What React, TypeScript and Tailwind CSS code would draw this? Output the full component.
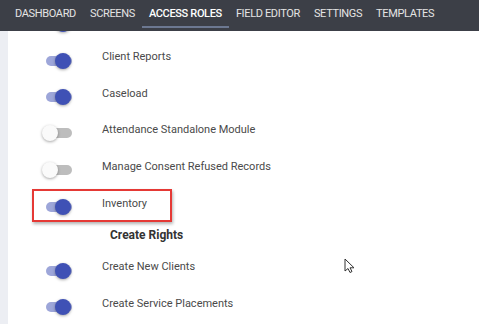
import React from "react";

const tabs = ["DASHBOARD", "SCREENS", "ACCESS ROLES", "FIELD EDITOR", "SETTINGS", "TEMPLATES"];

function Toggle({ on }: { on: boolean }) {
  return (
    <div className="relative w-[29px] h-[16px] shrink-0">
      <div
        className={
          "absolute left-[2px] top-[3px] w-[26px] h-[10px] rounded-full " +
          (on ? "bg-[#9da6d9]" : "bg-[#bdbdbd]")
        }
      />
      {on ? (
        <div className="absolute left-[11px] top-0 w-[16px] h-[16px] rounded-full bg-[#3f51b5] shadow-[0_1px_3px_rgba(0,0,0,0.35)]" />
      ) : (
        <div className="absolute left-[-2px] top-0 w-[16px] h-[16px] rounded-full bg-[#fafafa] shadow-[0_1px_3px_rgba(0,0,0,0.35)]" />
      )}
    </div>
  );
}

function Row({
  label,
  on,
  h,
  boxed,
}: {
  label: string;
  on: boolean;
  h: string;
  boxed?: boolean;
}) {
  return (
    <div className={"relative flex items-center pl-[36px] " + h}>
      <Toggle on={on} />
      {label && (
        <span className="ml-[29px] mb-[6px] text-[11px] text-[#4a4a4a]">{label}</span>
      )}
      {boxed && (
        <div className="absolute left-[24px] top-0 w-[140px] h-[33px] border-2 border-[#e53935] shadow-[1px_2px_3px_rgba(0,0,0,0.3)]" />
      )}
    </div>
  );
}

export default function App() {
  return (
    <div
      className="w-[479px] h-[324px] overflow-hidden bg-white flex flex-col"
      style={{ fontFamily: "Roboto, 'Liberation Sans', sans-serif" }}
    >
      <nav className="h-[31px] shrink-0 bg-[#3c3f47] flex pl-[8px] relative z-10">
        {tabs.map((t) => {
          const active = t === "ACCESS ROLES";
          return (
            <div
              key={t}
              className={
                "relative shrink-0 whitespace-nowrap px-[7px] pt-[7px] text-[11px] leading-[13px] tracking-[-0.35px] " +
                (active ? "text-white font-medium" : "text-[#e4e4e4] font-normal")
              }
            >
              {t}
              {active && (
                <div className="absolute left-0 right-0 bottom-[3px] h-[2px] bg-[#6c7891]" />
              )}
            </div>
          );
        })}
      </nav>
      <div className="flex-1 flex min-h-0">
        <div className="w-[8px] bg-[#eceef3] shrink-0" />
        <main className="flex-1 relative overflow-hidden">
          {/* list is scrolled: the row above Client Reports is mostly hidden */}
          <div className="flex flex-col mt-[-26px]">
            <Row label="" on h="h-[37px]" />
            <Row label="Client Reports" on h="h-[37px]" />
            <Row label="Caseload" on h="h-[36px]" />
            <Row label="Attendance Standalone Module" on={false} h="h-[36px]" />
            <Row label="Manage Consent Refused Records" on={false} h="h-[38px]" />
            <Row label="Inventory" on h="h-[36px]" boxed />
            <div className="h-[27px] pt-[3px] pl-[102px]">
              <span className="block text-[12px] leading-[14px] font-bold text-[#333333]">
                Create Rights
              </span>
            </div>
            <Row label="Create New Clients" on h="h-[37px]" />
            <Row label="Create Service Placements" on h="h-[36px]" />
          </div>
          <svg
            className="absolute left-[336px] top-[227px]"
            width="12"
            height="16"
            viewBox="0 0 12 16"
          >
            <path
              d="M1 1 L1 13 L4 10.5 L6 14.5 L8 13.5 L6 9.8 L10 9.8 Z"
              fill="white"
              stroke="#333"
              strokeWidth="1"
              strokeLinejoin="round"
            />
          </svg>
        </main>
      </div>
    </div>
  );
}
